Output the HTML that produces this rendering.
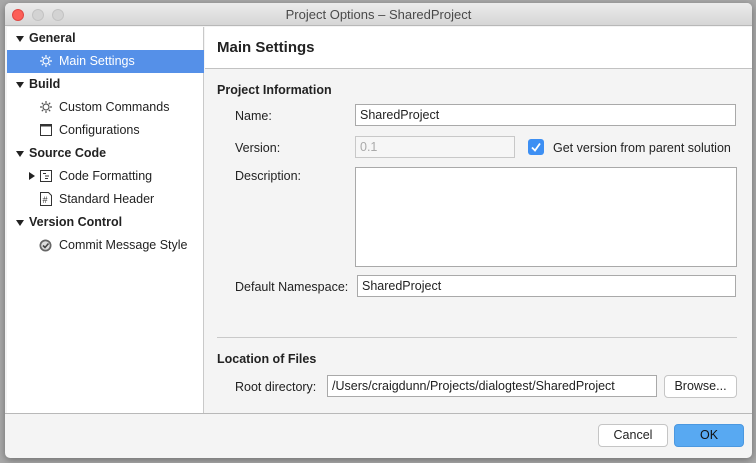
<!DOCTYPE html>
<html><head><meta charset="utf-8"><style>
*{margin:0;padding:0;box-sizing:border-box}
body{width:756px;height:463px;background:#a9a9a9;font-family:"Liberation Sans",sans-serif;font-size:12.5px;color:#222;position:relative;overflow:hidden}
.win{position:absolute;left:5px;top:3px;width:747px;height:455px;background:#f4f4f4;border-radius:5px;overflow:hidden;box-shadow:0 2px 8px rgba(0,0,0,.35)}
.title{position:absolute;left:0;top:0;width:100%;height:23px;background:linear-gradient(#ececec,#d6d6d6);border-bottom:1px solid #b8b8b8;text-align:center;line-height:23px;font-size:13px;color:#4a4a4a}
.dot{position:absolute;top:6px;width:12px;height:12px;border-radius:50%;background:#d3d3d3;border:1px solid #c3c3c3}
.abs{position:absolute}
.side{position:absolute;left:2px;top:24px;width:197px;height:386px;background:#fff;border-right:1px solid #c9c9c9}
.row{position:absolute;left:0;width:197px;height:23px;line-height:23px;white-space:nowrap}
.b{font-weight:bold}
.tri{position:absolute;left:9px;top:9px;width:0;height:0;border-left:4px solid transparent;border-right:4px solid transparent;border-top:6px solid #222}
.tr{position:absolute;left:22px;top:7px;width:0;height:0;border-top:4px solid transparent;border-bottom:4px solid transparent;border-left:6px solid #222}
.sel{background:#5590e8;color:#fff}
.hdr{position:absolute;left:200px;top:24px;width:547px;height:42px;background:#fff;border-bottom:1px solid #c2c2c2;font-weight:bold;font-size:15px;line-height:42px;padding-left:12px}
.inp{position:absolute;background:#fff;border:1px solid #a9a9a9;height:22px;line-height:20px;padding-left:4px;font-size:12.5px}
.lbl{position:absolute;white-space:nowrap}
.btn{position:absolute;height:23px;background:#fff;border:1px solid #c5c5c5;border-radius:4px;text-align:center;line-height:21px}
.foot{position:absolute;left:0;top:410px;width:100%;height:1px;background:#b8b8b8}
</style></head><body>
<div class="win">
<div class="title">Project Options – SharedProject
<div class="dot" style="left:7px;background:#fc5f57;border-color:#df4744"></div>
<div class="dot" style="left:27px"></div>
<div class="dot" style="left:47px"></div>
</div>
<div class="side">
<div class="row b" style="top:0"><span class="tri"></span><span style="padding-left:22px">General</span></div>
<div class="row sel" style="top:23px"><svg class="abs" style="left:33px;top:5px" width="12" height="12" viewBox="0 0 12 12"><circle cx="6" cy="6" r="3" fill="none" stroke="#fff" stroke-width="1.2"/><path d="M6 0v2M6 10v2M0 6h2M10 6h2M1.8 1.8l1.4 1.4M8.8 8.8l1.4 1.4M1.8 10.2l1.4-1.4M8.8 3.2l1.4-1.4" stroke="#fff" stroke-width="1.2"/></svg><span style="padding-left:52px">Main Settings</span></div>
<div class="row b" style="top:46px"><span class="tri"></span><span style="padding-left:22px">Build</span></div>
<div class="row" style="top:69px"><svg class="abs" style="left:33px;top:5px" width="12" height="12" viewBox="0 0 12 12"><circle cx="6" cy="6" r="3" fill="none" stroke="#555" stroke-width="1.2"/><path d="M6 0v2M6 10v2M0 6h2M10 6h2M1.8 1.8l1.4 1.4M8.8 8.8l1.4 1.4M1.8 10.2l1.4-1.4M8.8 3.2l1.4-1.4" stroke="#555" stroke-width="1.2"/></svg><span style="padding-left:52px">Custom Commands</span></div>
<div class="row" style="top:92px"><svg class="abs" style="left:33px;top:5px" width="12" height="12" viewBox="0 0 12 12"><rect x="0.5" y="0.5" width="11" height="11" fill="none" stroke="#333"/><rect x="0.5" y="0.5" width="11" height="2" fill="#333"/></svg><span style="padding-left:52px">Configurations</span></div>
<div class="row b" style="top:115px"><span class="tri"></span><span style="padding-left:22px">Source Code</span></div>
<div class="row" style="top:138px"><span class="tr"></span><svg class="abs" style="left:33px;top:5px" width="12" height="12" viewBox="0 0 12 12"><rect x="0.5" y="0.5" width="11" height="11" fill="none" stroke="#333"/><path d="M3 3.5h3M5 6h4M5 8.5h3" stroke="#333"/></svg><span style="padding-left:52px">Code Formatting</span></div>
<div class="row" style="top:161px"><svg class="abs" style="left:33px;top:4px" width="12" height="14" viewBox="0 0 12 14"><path d="M0.5 0.5h8l3 3v10h-11z" fill="none" stroke="#333"/><text x="2.5" y="11" font-size="9" font-family="Liberation Sans" fill="#333">#</text></svg><span style="padding-left:52px">Standard Header</span></div>
<div class="row b" style="top:184px"><span class="tri"></span><span style="padding-left:22px">Version Control</span></div>
<div class="row" style="top:207px"><svg class="abs" style="left:32px;top:5px" width="13" height="13" viewBox="0 0 13 13"><circle cx="6.5" cy="6.5" r="6" fill="#666"/><circle cx="6.5" cy="6.5" r="4.3" fill="#ddd"/><path d="M4 6.5l2 2 3.5-4" stroke="#444" stroke-width="1.6" fill="none"/></svg><span style="padding-left:52px">Commit Message Style</span></div>
</div>
<div class="hdr">Main Settings</div>
<div class="lbl b" style="left:212px;top:80px">Project Information</div>
<div class="lbl" style="left:230px;top:106px">Name:</div>
<div class="inp" style="left:350px;top:101px;width:381px">SharedProject</div>
<div class="lbl" style="left:230px;top:138px">Version:</div>
<div class="inp" style="left:350px;top:133px;width:160px;background:#f6f6f6;border-color:#c8c8c8;color:#aaa">0.1</div>
<div class="abs" style="left:523px;top:136px;width:16px;height:16px;border-radius:3px;background:#3d8ff3"><svg width="16" height="16" viewBox="0 0 16 16"><path d="M4 8.5l3 3 5-7" stroke="#fff" stroke-width="1.8" fill="none"/></svg></div>
<div class="lbl" style="left:548px;top:138px">Get version from parent solution</div>
<div class="lbl" style="left:230px;top:166px">Description:</div>
<div class="inp" style="left:350px;top:164px;width:382px;height:100px"></div>
<div class="lbl" style="left:230px;top:277px">Default Namespace:</div>
<div class="inp" style="left:352px;top:272px;width:379px">SharedProject</div>
<div class="abs" style="left:212px;top:334px;width:520px;height:1px;background:#c9c9c9"></div>
<div class="lbl b" style="left:212px;top:349px">Location of Files</div>
<div class="lbl" style="left:230px;top:377px">Root directory:</div>
<div class="inp" style="left:322px;top:372px;width:330px">/Users/craigdunn/Projects/dialogtest/SharedProject</div>
<div class="btn" style="left:659px;top:372px;width:73px">Browse...</div>
<div class="foot"></div>
<div class="btn" style="left:593px;top:421px;width:70px">Cancel</div>
<div class="btn" style="left:669px;top:421px;width:70px;background:#58a9f2;border-color:#4b98e0;color:#111">OK</div>
</div>
</body></html>
